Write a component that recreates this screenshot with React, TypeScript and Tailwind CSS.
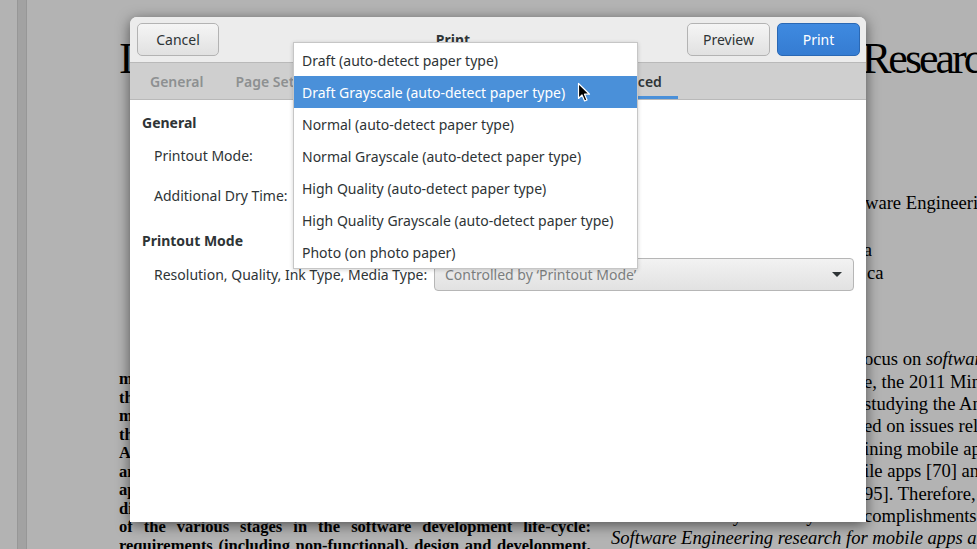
import React from 'react';

const leftLines = [
  'mobile apps. We also include work that targets',
  'the app store as a source of information for',
  'mobile app developers. We survey literature on',
  'the analysis of app stores, for instance the',
  'Apple App Store, Google Play and BlackBerry',
  'and Windows Phone stores. We categorise each',
  'app store analysis paper into one of the',
  'different areas of software engineering, each',
  'of the various stages in the software development life-cycle:',
  'requirements (including non-functional), design and development,',
];

// prefix sits behind the dialog, tail is what shows past its right edge
const rightLines: { pre: string; tail: React.ReactNode }[] = [
  { pre: 'Prior work has had a f', tail: <>ocus on <i>software engineering</i></> },
  { pre: 'For exampl', tail: 'e, the 2011 Mining Software' },
  { pre: 'Challenge was devoted to ', tail: 'studying the Android platform' },
  { pre: 'Many papers have focus', tail: 'ed on issues related to' },
  { pre: 'apps, others were m', tail: 'ining mobile app stores' },
  { pre: 'development of mob', tail: 'ile apps [70] and' },
  { pre: 'and testing [', tail: '95]. Therefore, it is' },
  { pre: 'is timely to survey the ac', tail: 'complishments of' },
];

const menuItems = [
  'Draft (auto-detect paper type)',
  'Draft Grayscale (auto-detect paper type)',
  'Normal (auto-detect paper type)',
  'Normal Grayscale (auto-detect paper type)',
  'High Quality (auto-detect paper type)',
  'High Quality Grayscale (auto-detect paper type)',
  'Photo (on photo paper)',
];

const tabs = ['General', 'Page Setup', 'Job', 'Image Quality', 'Color', 'Advanced'];

const Arrow = () => (
  <svg width="10" height="6" viewBox="0 0 10 6">
    <path d="M0 0 L10 0 L5 5 Z" fill="#2e3436" />
  </svg>
);

const Combo = ({ text, className = '' }: { text: string; className?: string }) => (
  <div
    className={`h-[33px] flex items-center justify-between pl-[10px] pr-[11px] rounded-[4px] border border-[#b6b6b6] bg-gradient-to-b from-[#f2f2f2] to-[#e2e2e2] ${className}`}
  >
    <span>{text}</span>
    <Arrow />
  </div>
);

const Pre = ({ w, children }: { w: string; children: React.ReactNode }) => (
  <span className={`${w} shrink-0 flex justify-end overflow-hidden`}>{children}</span>
);

const Document = () => (
  <div className="flex-1 pl-[92px] font-['Liberation_Serif',serif] text-black">
    <h1 className="flex whitespace-nowrap pt-[35px] text-[44px] leading-[48px] tracking-[-3px]">
      <span className="w-[743px] shrink-0 overflow-hidden">Information Retrieval for App Store</span>
      <span>Research</span>
    </h1>
    <div className="flex gap-[20px]">
      <div className="w-[472px] shrink-0 pt-[287px] text-[16.5px] leading-[18.55px] font-bold">
        {leftLines.map((l, i) => (
          <div key={i} className="text-justify [text-align-last:justify]">
            {l}
          </div>
        ))}
      </div>
      <div className="shrink-0 pt-[108px] text-[18.6px] leading-[23.3px] whitespace-nowrap">
        <div className="flex">
          <Pre w="w-[254px]">Computer Science and Soft</Pre>
          <span>ware Engineering</span>
        </div>
        <div className="flex">
          <Pre w="w-[254px]">Concordia University</Pre>
        </div>
        <div className="flex">
          <Pre w="w-[261px]">Montréal, Québec, Canada</Pre>
        </div>
        <div className="flex">
          <Pre w="w-[256px]">firstname@encs.concordia.</Pre>
          <span>ca</span>
        </div>
        <div className="mt-[64px] leading-[22.4px]">
          {rightLines.map((l, i) => (
            <div key={i} className="flex">
              <Pre w="w-[253px]">{l.pre}</Pre>
              <span>{l.tail}</span>
            </div>
          ))}
          <div className="italic">Software Engineering research for mobile apps and</div>
        </div>
      </div>
    </div>
  </div>
);

const Dialog = () => (
  <div className="absolute left-[130px] top-[17px] w-[736px] h-[505px] flex flex-col overflow-hidden rounded-t-[7px] bg-white shadow-[0_3px_14px_rgba(0,0,0,0.55)] text-[14px] text-[#2e3436]">
    <div className="h-[46px] shrink-0 flex items-center gap-[7px] px-[6px] bg-[#ececec] border-b border-[#b9b9b9]">
      <button className="w-[82px] h-[33px] ml-[1px] rounded-[5px] border border-[#b3b3b3] bg-gradient-to-b from-[#f5f5f5] to-[#e1e1e1]">
        Cancel
      </button>
      <div className="flex-1 text-center font-bold">Print</div>
      <button className="w-[83px] h-[33px] rounded-[5px] border border-[#b3b3b3] bg-gradient-to-b from-[#f5f5f5] to-[#e1e1e1]">
        Preview
      </button>
      <button className="w-[83px] h-[33px] rounded-[5px] border border-[#2a68b4] bg-gradient-to-b from-[#3f8ae0] to-[#357cd2] text-white">
        Print
      </button>
    </div>
    <div className="h-[37px] shrink-0 flex items-stretch pl-[4px] bg-[#cfcfcf] border-b border-[#b9b9b9] font-semibold">
      {tabs.map((t) => (
        <div
          key={t}
          className={`flex items-center px-[16px] pt-[3px] border-b-[3px] ${
            t === 'Advanced' ? 'border-[#4a90d9] text-[#2e3436]' : 'border-transparent text-[#8d9091]'
          }`}
        >
          {t}
        </div>
      ))}
    </div>
    <div className="flex-1 flex flex-col pt-[13px] px-[12px]">
      <div className="font-bold leading-[20px]">General</div>
      <div className="flex items-center mt-[6px] pl-[12px]">
        <div className="w-[146px]">Printout Mode:</div>
        <Combo text="Draft Grayscale (auto-detect paper type)" className="w-[330px]" />
      </div>
      <div className="flex items-center mt-[7px] pl-[12px]">
        <div className="w-[146px]">Additional Dry Time:</div>
        <Combo text="Printer Default" className="w-[330px]" />
      </div>
      <div className="font-bold leading-[20px] mt-[19px]">Printout Mode</div>
      <div className="flex items-center mt-[7px] pl-[12px]">
        <div className="w-[280px] whitespace-nowrap">Resolution, Quality, Ink Type, Media Type:</div>
        <Combo text="Controlled by ‘Printout Mode’" className="flex-1 text-[#7c7f80]" />
      </div>
    </div>
  </div>
);

const Menu = () => (
  <div className="absolute left-[293px] top-[42px] w-[345px] h-[227px] py-[1px] bg-white border border-[#c6c6c6] shadow-[0_1px_4px_rgba(0,0,0,0.18)] text-[14px] text-[#2e3436]">
    {menuItems.map((m, i) => (
      <div
        key={m}
        className={`h-[32px] flex items-center px-[8px] whitespace-nowrap ${i === 1 ? 'bg-[#4a90d9] text-white' : ''}`}
      >
        {m}
      </div>
    ))}
  </div>
);

const Cursor = () => (
  <svg width="14" height="21" viewBox="0 0 14 21" className="absolute left-[577px] top-[82px]">
    <path
      d="M1.5 1.5 L1.5 16.5 L5 13 L7.6 19 L10 18 L7.5 12.2 L12.5 12.2 Z"
      fill="#000"
      stroke="#fff"
      strokeWidth="1.2"
      strokeLinejoin="round"
    />
  </svg>
);

export default function App() {
  return (
    <div className="relative w-[977px] h-[549px] overflow-hidden flex bg-[#b3b3b3] font-['Noto_Sans',sans-serif]">
      <div className="w-[17px] shrink-0" />
      <div className="w-[10px] shrink-0 bg-[#a2a2a2] border-x border-[#979797]" />
      <Document />
      <Dialog />
      <Menu />
      <Cursor />
    </div>
  );
}
